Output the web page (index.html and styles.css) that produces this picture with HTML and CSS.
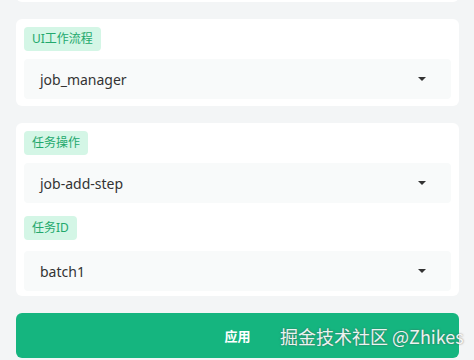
FILE: index.html
```html
<!DOCTYPE html>
<html lang="zh-CN">
<head>
  <meta charset="UTF-8">
  <title>任务设置</title>
  <link rel="stylesheet" href="styles.css">
</head>
<body>
  <div class="page">
    <div class="card card-top"></div>

    <div class="card">
      <div class="field">
        <span class="pill">UI工作流程</span>
        <div class="select">
          <span>job_manager</span>
          <span class="arrow"></span>
        </div>
      </div>
    </div>

    <div class="card">
      <div class="field">
        <span class="pill">任务操作</span>
        <div class="select">
          <span>job-add-step</span>
          <span class="arrow"></span>
        </div>
      </div>
      <div class="field">
        <span class="pill">任务ID</span>
        <div class="select">
          <span>batch1</span>
          <span class="arrow"></span>
        </div>
      </div>
    </div>

    <button class="apply">应用</button>
  </div>

  <div class="watermark">掘金技术社区 @Zhikes</div>
</body>
</html>
```

FILE: styles.css
```css
* { box-sizing: border-box; }

body {
  margin: 0;
  background: #f3f5f6;
  font-family: 'Noto Sans', 'Noto Sans CJK SC', sans-serif;
  color: #333;
  height: 360px;
  overflow: hidden;
  position: relative;
}

.page {
  display: flex;
  flex-direction: column;
  gap: 16px;
  padding: 0 15px 0 16px;
  margin-top: -14px;
}

.card {
  background: #fff;
  border-radius: 6px;
  padding: 8px 8px 7px;
  display: flex;
  flex-direction: column;
  gap: 13px;
}

.card-top {
  height: 16px;
}

.card + .card {
  margin-top: 1px;
}

.card + .card + .card {
  padding-bottom: 5px;
}

.card + .card + .card .field + .field {
  gap: 11px;
}

.field {
  display: flex;
  flex-direction: column;
  align-items: flex-start;
  gap: 8px;
}

.pill {
  background: #d4f6e6;
  color: #22a86c;
  font-size: 12px;
  line-height: 24px;
  height: 24px;
  padding: 0 8px;
  border-radius: 4px;
}

.select {
  align-self: stretch;
  height: 40px;
  background: #f8fafa;
  border-radius: 4px;
  display: flex;
  align-items: center;
  justify-content: space-between;
  padding: 0 25px 0 16px;
  font-size: 14px;
}

.arrow {
  width: 0;
  height: 0;
  border-left: 4px solid transparent;
  border-right: 4px solid transparent;
  border-top: 4px solid #333;
}

.apply {
  margin-top: 1px;
  height: 45px;
  border: none;
  border-radius: 6px;
  background: #15b57f;
  color: #fff;
  font-family: 'Noto Sans CJK SC', sans-serif;
  font-size: 13px;
  font-weight: bold;
}

.watermark {
  position: absolute;
  left: 280px;
  top: 323px;
  font-family: 'Noto Sans CJK SC', sans-serif;
  font-size: 18px;
  color: rgba(255, 255, 255, 0.92);
  text-shadow: 0 0 2px rgba(80, 80, 80, 0.8);
  white-space: nowrap;
}
```
